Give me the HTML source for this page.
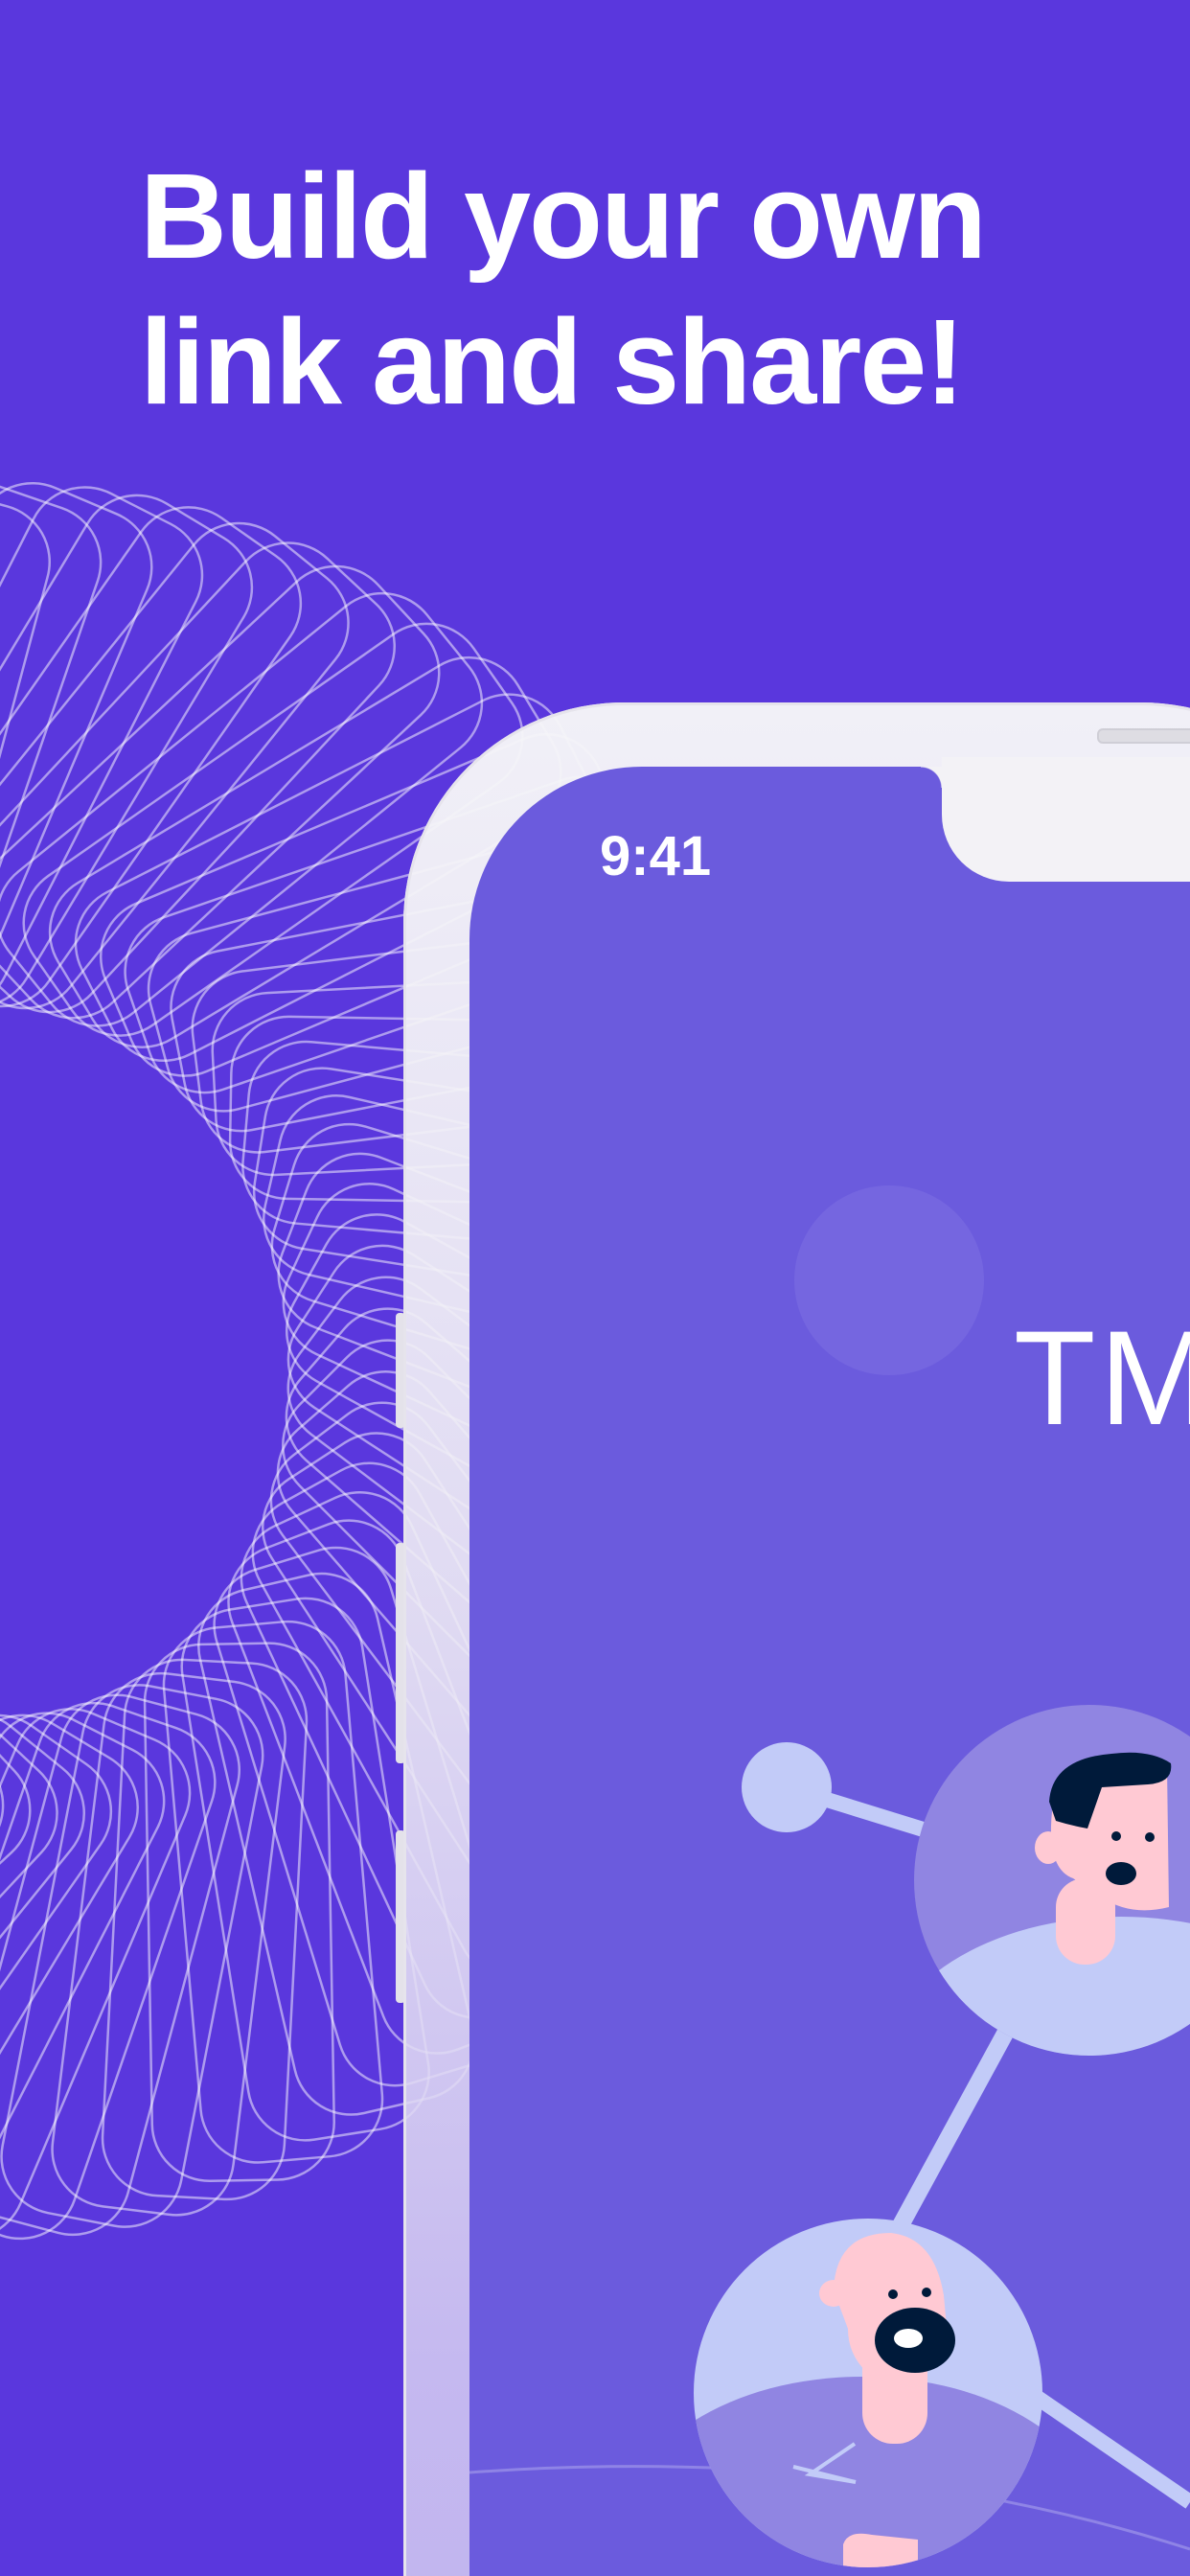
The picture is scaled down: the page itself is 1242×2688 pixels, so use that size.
<!DOCTYPE html>
<html><head><meta charset="utf-8"><style>
html,body{margin:0;padding:0;width:1242px;height:2688px;overflow:hidden}
body{background:#5a37dd;font-family:"Liberation Sans",sans-serif}
#wrap{position:relative;width:1242px;height:2688px;overflow:hidden;background:#5a37dd}
.h{position:absolute;left:146px;top:150px;color:#fff;font-weight:bold;font-size:126px;line-height:152px;letter-spacing:-2px}
#spiro{position:absolute;left:0;top:0}
.frame{position:absolute;left:421px;top:733px;width:1000px;height:2300px;border-radius:230px;background:linear-gradient(rgba(246,246,248,.97) 0%,rgba(239,237,245,.9) 40%,rgba(216,208,243,.85) 75%,rgba(200,189,240,.9) 100%);box-shadow:inset 0 0 0 3px #e6e4ec}
.btn{position:absolute;left:413px;width:10px;background:#e4e2ea;border-radius:4px}
.screen{position:absolute;left:490px;top:800px;width:900px;height:2200px;border-radius:180px;background:#6b5bdd;overflow:hidden}
.notch{position:absolute;left:983px;top:790px;width:400px;height:130px;background:#f3f2f6;border-radius:0 0 0 70px}
.notch:before{content:"";position:absolute;left:-22px;top:10px;width:22px;height:22px;background:radial-gradient(circle at 0 100%,transparent 21px,#f3f2f6 22px)}
.time{position:absolute;left:626px;top:860px;color:#fff;font-size:58px;font-weight:bold}
.spk{position:absolute;left:1145px;top:760px;width:120px;height:12px;border-radius:6px;background:#dedde3;border:2px solid #cfced6}
</style></head><body><div id="wrap">
<div class="h">Build your own<br>link and share!</div>
<svg id="spiro" width="1242" height="2688"></svg>
<div class="btn" style="top:1370px;height:120px"></div>
<div class="btn" style="top:1610px;height:230px"></div>
<div class="btn" style="top:1910px;height:180px"></div>
<div class="frame"></div>
<div class="screen">
<svg width="900" height="2200" style="position:absolute;left:0;top:0">
<circle cx="438" cy="536" r="99" fill="#7566e0"/>
<text x="568" y="686" fill="#fff" font-family="Liberation Sans" font-size="140" font-weight="normal" letter-spacing="4">TM</text>
<g transform="translate(-490,-800)">
<line x1="821" y1="1865" x2="970" y2="1911" stroke="#c2cbf8" stroke-width="16"/>
<circle cx="821" cy="1865" r="47" fill="#c2cbf8"/>
<line x1="1050" y1="2120" x2="940" y2="2322" stroke="#c2cbf8" stroke-width="18"/>
<line x1="1080" y1="2500" x2="1242" y2="2611" stroke="#c2cbf8" stroke-width="16"/>
<path d="M490 2580 Q900 2550 1242 2660" stroke="#8f84e6" stroke-width="3" fill="none"/>
<clipPath id="c1"><circle cx="1137" cy="1962" r="183"/></clipPath>
<circle cx="1137" cy="1962" r="183" fill="#9085e2"/>
<g clip-path="url(#c1)">
<ellipse cx="1170" cy="2160" rx="250" ry="160" fill="#c2cbf8"/>
<rect x="1102" y="1960" width="62" height="90" rx="30" fill="#ffc9d3"/>
<path d="M1098 1890 Q1100 1840 1160 1838 L1218 1842 L1220 1990 Q1180 2000 1150 1980 L1120 1960 Q1092 1950 1098 1890Z" fill="#ffc9d3"/>
<path d="M1095 1880 Q1098 1835 1160 1830 Q1200 1825 1222 1840 Q1225 1860 1198 1862 L1150 1865 L1135 1908 Q1118 1905 1102 1900Z" fill="#001a3a"/>
<ellipse cx="1094" cy="1928" rx="14" ry="17" fill="#ffc9d3"/>
<ellipse cx="1170" cy="1955" rx="16" ry="12" fill="#001a3a"/>
<circle cx="1165" cy="1916" r="5" fill="#001a3a"/><circle cx="1200" cy="1917" r="5" fill="#001a3a"/>
</g>
<clipPath id="c2"><circle cx="906" cy="2497" r="182"/></clipPath>
<circle cx="906" cy="2497" r="182" fill="#c2cbf8"/>
<g clip-path="url(#c2)">
<ellipse cx="900" cy="2640" rx="250" ry="160" fill="#9085e2"/>
<rect x="900" y="2440" width="68" height="110" rx="32" fill="#ffc9d3"/>
<path d="M870 2390 Q872 2330 930 2330 Q975 2335 985 2395 L990 2450 Q960 2490 910 2480 Q885 2460 885 2430Z" fill="#ffc9d3"/>
<ellipse cx="870" cy="2393" rx="15" ry="14" fill="#ffc9d3"/>
<ellipse cx="955" cy="2442" rx="42" ry="34" fill="#001a3a"/>
<ellipse cx="948" cy="2440" rx="15" ry="10" fill="#fff"/>
<circle cx="932" cy="2394" r="5" fill="#001a3a"/><circle cx="967" cy="2392" r="5" fill="#001a3a"/>
<path d="M828 2574 L893 2590 L845 2582 L892 2550" stroke="#c2cbf8" stroke-width="4" fill="none"/>
<path d="M880 2655 Q885 2640 910 2645 L958 2650 L958 2700 L880 2700Z" fill="#ffc9d3"/>
</g>
</g>
</svg>
</div>
<div class="notch"></div>
<div class="spk"></div>
<div class="time">9:41</div>
</div>
<script>
(function(){
var s=document.getElementById('spiro'),h='';
var cx=0,cy=1420,N=90;
for(var i=0;i<N;i++){
 var t=i/N*Math.PI*2;
 var x=cx+570*Math.cos(t), y=cy+640*Math.sin(t);
 var a=t*180/Math.PI+25;
 h+='<rect x="'+(x-280).toFixed(1)+'" y="'+(y-95).toFixed(1)+'" width="560" height="190" rx="60" transform="rotate('+a.toFixed(1)+' '+x.toFixed(1)+' '+y.toFixed(1)+')" fill="none" stroke="rgba(255,255,255,0.5)" stroke-width="2.5"/>';
}
s.innerHTML=h;
})();
</script>
</body></html>
